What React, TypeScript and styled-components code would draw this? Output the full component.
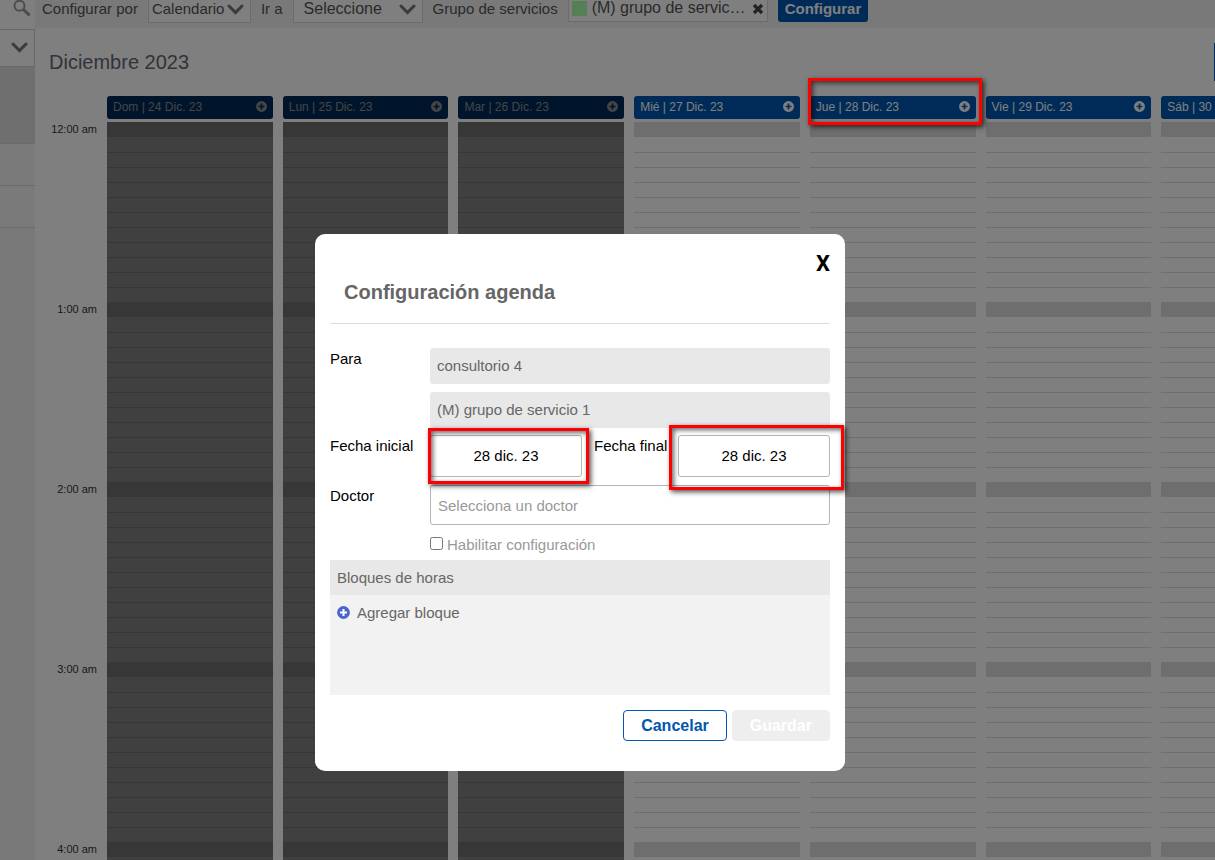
import React from "react";
import styled, { createGlobalStyle } from "styled-components";

const GlobalStyle = createGlobalStyle`
  *, *::before, *::after { box-sizing: border-box; }
  body {
    margin: 0;
    background: #fff;
    color: #555;
    font-family: "Liberation Sans", Arial, Helvetica, sans-serif;
    font-size: 15px;
    overflow: hidden;
  }
  button, input, select { font: inherit; color: inherit; margin: 0; }
`;

const Page = styled.div`
  display: flex;
  height: 100vh;
  overflow: hidden;
`;

const Sidebar = styled.aside`
  flex: 0 0 35px;
  display: flex;
  flex-direction: column;
  background: #f2f2f2;
`;

const SearchBox = styled.button`
  display: flex;
  justify-content: flex-end;
  align-items: flex-start;
  height: 29px;
  padding: 0 4px 0 0;
  border: 0;
  background: #fff;
`;

const SideToggle = styled.button`
  display: flex;
  align-items: center;
  justify-content: center;
  height: 38px;
  padding: 0 0 0 5px;
  border: 1px solid #d0d0d0;
  border-left: 0;
  background: #fff;
`;

const SideItem = styled.div<{ $active?: boolean }>`
  height: ${(p) => (p.$active ? 77 : 42)}px;
  border-bottom: 1px solid #d6d6d6;
  background: ${(p) => (p.$active ? "#dedede" : "#f5f5f5")};
`;

const Main = styled.main`
  flex: 1;
  min-width: 0;
  overflow: hidden;
`;

const Toolbar = styled.div`
  display: flex;
  align-items: flex-start;
  height: 28px;
  padding-left: 7px;
  background: #f2f2f2;
  line-height: 18px;
  white-space: nowrap;
`;

const ToolLabel = styled.label`
  margin-right: 10px;
`;

const SelectBox = styled.span<{ $large?: boolean }>`
  position: relative;
  flex: 0 0 ${(p) => (p.$large ? 130 : 103)}px;
  height: 23px;
  margin-right: 10px;
  border: 1px solid #d6d6d6;
  border-top: 0;
  background: #fff;
  font-size: ${(p) => (p.$large ? 16 : 15)}px;

  select {
    appearance: none;
    display: block;
    width: 100%;
    height: 18px;
    padding: 0 0 0 ${(p) => (p.$large ? 10 : 3)}px;
    border: 0;
    background: none;
    line-height: 18px;
  }

  svg {
    position: absolute;
    top: 4px;
    right: 6px;
    pointer-events: none;
  }
`;

const GroupField = styled.div`
  display: flex;
  align-items: flex-start;
  flex: 0 0 200px;
  height: 22px;
  margin-right: 10px;
  padding: 0 3px;
  border: 1px solid #d6d6d6;
  border-top: 0;
  background: #fff;
  font-size: 16px;
  line-height: 16px;
`;

const Swatch = styled.span`
  flex: 0 0 15px;
  height: 15px;
  margin: 1px 5px 0 0;
  background: #aaffaa;
`;

const GroupName = styled.span`
  flex: 1;
`;

const ClearButton = styled.button`
  padding: 3px 0 0;
  border: 0;
  background: none;
  line-height: 0;
`;

const ConfigureButton = styled.button`
  height: 22px;
  padding: 0 7px 4px;
  border: 0;
  border-radius: 0 0 3px 3px;
  background: #0057b0;
  color: #fff;
  font-weight: 700;
  line-height: 18px;
`;

const MonthBar = styled.div`
  display: flex;
  justify-content: space-between;
  align-items: center;
  height: 68px;
  padding-left: 14px;
`;

const Month = styled.h1`
  margin: 0;
  font-size: 20px;
  font-weight: 400;
  line-height: 24px;
  color: #667;
`;

const ViewButton = styled.button`
  width: 1px;
  height: 38px;
  padding: 0;
  border: 0;
  background: #0057b0;
`;

const Schedule = styled.div`
  display: flex;
`;

const TimeColumn = styled.div`
  flex: 0 0 62px;
  margin-right: 10px;
  padding-top: 26px;
  text-align: right;
`;

const TimeLabel = styled.div`
  height: 180px;
  color: #333;
  font-size: 11px;
  line-height: 14px;
`;

const Week = styled.div`
  flex: 1;
  display: grid;
  grid-template-columns: repeat(7, minmax(0, 1fr));
  column-gap: 10px;
  margin-right: -112px;
`;

const DayHeader = styled.header`
  display: flex;
  align-items: center;
  justify-content: space-between;
  height: 23px;
  margin-bottom: 3px;
  padding: 0 6px 2px;
  border-radius: 3px;
  background: #0057b0;
  color: #fff;
  font-size: 12px;
  line-height: 14px;
  white-space: nowrap;
`;

const AddButton = styled.button`
  padding: 0;
  border: 0;
  background: none;
  line-height: 0;
`;

const Hour = styled.div`
  display: grid;
  grid-template-rows: repeat(12, 15px);
`;

const Slot = styled.div`
  border-top: 1px solid #dcdcdc;

  &:nth-child(1) { background: #dcdcdc; }
  &:nth-child(2) { border-top: 0; }
`;

const Day = styled.section<{ $past: boolean }>`
  position: relative;

  ${DayHeader} {
    background: ${(p) => (p.$past ? "#002b58" : "#0057b0")};
    color: ${(p) => (p.$past ? "#8c8c8c" : "#fff")};
  }

  ${Hour} { background: ${(p) => (p.$past ? "#808080" : "#fff")}; }

  ${Slot} { border-color: ${(p) => (p.$past ? "#6e6e6e" : "#dcdcdc")}; }

  ${Slot}:nth-child(1) { background: ${(p) => (p.$past ? "#6e6e6e" : "#dcdcdc")}; }
`;

const Overlay = styled.div`
  position: fixed;
  inset: 0;
  display: flex;
  align-items: flex-start;
  justify-content: center;
  padding: 234px 55px 0 0;
  background: rgba(0, 0, 0, 0.5);
`;

const Dialog = styled.form`
  flex: 0 1 530px;
  padding: 15px 15px 30px;
  border-radius: 10px;
  background: #fff;
  color: #000;
`;

const CloseButton = styled.button`
  display: block;
  margin-left: auto;
  padding: 0;
  border: 0;
  background: none;
  font-family: Roboto, sans-serif;
  font-size: 22px;
  font-weight: 700;
  line-height: 30px;
`;

const Title = styled.h2`
  margin: 0 0 24px;
  padding: 1px 14px 19px;
  border-bottom: 1px solid #ddd;
  color: #666;
  font-size: 20px;
  line-height: 24px;
`;

const Row = styled.div<{ $gap: number }>`
  display: flex;
  align-items: flex-start;
  margin-bottom: ${(p) => p.$gap}px;
`;

const Label = styled.label<{ $second?: boolean }>`
  flex: 0 0 ${(p) => (p.$second ? 96 : 100)}px;
  padding: 2px 0 0 ${(p) => (p.$second ? 12 : 0)}px;
  line-height: 18px;
  white-space: nowrap;
`;

const Fields = styled.div`
  flex: 1;
  min-width: 0;
  display: grid;
  gap: 8px;
`;

const Input = styled.input`
  width: 100%;
  min-width: 0;
  height: 40px;
  padding: 0 7px;
  border: 1px solid #b5b5b5;
  border-radius: 3px;
  background: #fff;

  &::placeholder { color: #999; opacity: 1; }
`;

const ReadOnlyInput = styled(Input)`
  height: 36px;
  padding-bottom: 2px;
  border: 0;
  background: #e8e8e8;
  color: #666;
`;

const DateInput = styled(Input)`
  height: 42px;
  padding-bottom: 2px;
  text-align: center;
`;

const DateBox = styled.div`
  position: relative;
  flex: 1;
`;

const Highlight = styled.span<{ $inset: string }>`
  position: absolute;
  inset: ${(p) => p.$inset};
  border: 3px solid #f00;
  box-shadow: 2px 2px 5px rgba(0, 0, 0, 0.7), inset 2px 2px 5px rgba(0, 0, 0, 0.6);
  pointer-events: none;
  z-index: 1;
`;

const DayHighlight = styled(Highlight)`
  height: 47px;
`;

const CheckLabel = styled.label`
  display: flex;
  align-items: center;
  gap: 4px;
  height: 18px;
  margin: 11px 0 6px 100px;
  color: #999;
  line-height: 18px;

  input { width: 13px; height: 13px; margin-bottom: 3px; }
`;

const Blocks = styled.section`
  min-height: 135px;
  background: #f2f2f2;
  color: #666;
`;

const BlocksTitle = styled.h3`
  margin: 0;
  padding: 0 7px;
  background: #e8e8e8;
  font-size: 15px;
  font-weight: 400;
  line-height: 35px;
`;

const AddBlock = styled.button`
  display: flex;
  align-items: center;
  gap: 7px;
  height: 35px;
  padding: 0 7px;
  border: 0;
  background: none;
`;

const Actions = styled.footer`
  display: flex;
  justify-content: flex-end;
  gap: 5px;
  margin-top: 15px;
`;

const ActionButton = styled.button`
  height: 31px;
  padding: 0 17px;
  border: 1px solid #0057b0;
  border-radius: 4px;
  background: #fff;
  color: #0057b0;
  font-size: 16px;
  font-weight: 700;

  &:disabled {
    border-color: #eee;
    background: #eee;
    color: #fff;
  }
`;

const Chevron = () => (
  <svg width="17" height="12" viewBox="0 0 17 12" fill="none" aria-hidden="true">
    <path d="M2 2 8.5 8.6 15 2" stroke="#777" strokeWidth="3" strokeLinecap="round" />
  </svg>
);

const SearchIcon = () => (
  <svg width="18" height="17" viewBox="0 0 18 17" fill="none" stroke="#999" aria-hidden="true">
    <circle cx="6.5" cy="5.8" r="5" strokeWidth="2" />
    <path d="m10.8 9.8 4.8 4.6" strokeWidth="3" strokeLinecap="round" />
  </svg>
);

const ClearIcon = () => (
  <svg width="12" height="12" viewBox="0 0 12 12" aria-hidden="true">
    <path d="m2 2 8 8M10 2l-8 8" stroke="#444" strokeWidth="3.2" />
  </svg>
);

const PlusCircle = ({ size, color, cross }: { size: number; color: string; cross: string }) => (
  <svg width={size} height={size} viewBox="0 0 12 12" aria-hidden="true">
    <circle cx="6" cy="6" r="5.9" fill={color} />
    <path d="M6 2.8v6.4M2.8 6h6.4" stroke={cross} strokeWidth="1.9" />
  </svg>
);

const days = [
  { name: "Dom | 24 Dic. 23", past: true },
  { name: "Lun | 25 Dic. 23", past: true },
  { name: "Mar | 26 Dic. 23", past: true },
  { name: "Mié | 27 Dic. 23", past: false },
  { name: "Jue | 28 Dic. 23", past: false, marked: true },
  { name: "Vie | 29 Dic. 23", past: false },
  { name: "Sáb | 30 Dic. 23", past: false },
];

const hours = ["12:00 am", "1:00 am", "2:00 am", "3:00 am", "4:00 am"];
const slots = Array.from({ length: 12 }, (_, i) => i);

export default function App() {
  return (
    <>
      <GlobalStyle />
      <Page>
        <Sidebar>
          <SearchBox type="button" aria-label="Buscar"><SearchIcon /></SearchBox>
          <SideToggle type="button" aria-label="Desplegar"><Chevron /></SideToggle>
          <SideItem $active />
          <SideItem />
          <SideItem />
        </Sidebar>
        <Main>
          <Toolbar>
            <ToolLabel htmlFor="mode">Configurar por</ToolLabel>
            <SelectBox>
              <select id="mode"><option>Calendario</option></select>
              <Chevron />
            </SelectBox>
            <ToolLabel htmlFor="goto">Ir a</ToolLabel>
            <SelectBox $large>
              <select id="goto"><option>Seleccione</option></select>
              <Chevron />
            </SelectBox>
            <ToolLabel as="span">Grupo de servicios</ToolLabel>
            <GroupField>
              <Swatch />
              <GroupName>(M) grupo de servic…</GroupName>
              <ClearButton type="button" aria-label="Quitar"><ClearIcon /></ClearButton>
            </GroupField>
            <ConfigureButton type="button">Configurar</ConfigureButton>
          </Toolbar>
          <MonthBar>
            <Month>Diciembre 2023</Month>
            <ViewButton type="button" aria-label="Vista" />
          </MonthBar>
          <Schedule>
            <TimeColumn>
              {hours.map((h) => <TimeLabel key={h}>{h}</TimeLabel>)}
            </TimeColumn>
            <Week>
              {days.map((d) => (
                <Day key={d.name} $past={d.past}>
                  <DayHeader>
                    {d.name}
                    <AddButton type="button" aria-label="Agregar">
                      <PlusCircle
                        size={11}
                        color={d.past ? "#8c8c8c" : "#fff"}
                        cross={d.past ? "#002b58" : "#0057b0"}
                      />
                    </AddButton>
                  </DayHeader>
                  {hours.map((h) => (
                    <Hour key={h}>
                      {slots.map((s) => <Slot key={s} />)}
                    </Hour>
                  ))}
                  {d.marked && <DayHighlight $inset="-18px -6px auto -2px" />}
                </Day>
              ))}
            </Week>
          </Schedule>
        </Main>
      </Page>
      <Overlay>
        <Dialog role="dialog" aria-labelledby="dialog-title">
          <CloseButton type="button" aria-label="Cerrar">X</CloseButton>
          <Title id="dialog-title">Configuración agenda</Title>
          <Row $gap={7}>
            <Label htmlFor="room">Para</Label>
            <Fields>
              <ReadOnlyInput id="room" readOnly value="consultorio 4" />
              <ReadOnlyInput aria-label="Grupo" readOnly value="(M) grupo de servicio 1" />
            </Fields>
          </Row>
          <Row $gap={8}>
            <Label htmlFor="start">Fecha inicial</Label>
            <DateBox>
              <DateInput id="start" readOnly value="28 dic. 23" />
              <Highlight $inset="-7px -7px -7px -2px" />
            </DateBox>
            <Label $second htmlFor="end">Fecha final</Label>
            <DateBox>
              <DateInput id="end" readOnly value="28 dic. 23" />
              <Highlight $inset="-10px -14px -13px -9px" />
            </DateBox>
          </Row>
          <Row $gap={0}>
            <Label htmlFor="doctor">Doctor</Label>
            <Input id="doctor" placeholder="Selecciona un doctor" />
          </Row>
          <CheckLabel>
            <input type="checkbox" />
            Habilitar configuración
          </CheckLabel>
          <Blocks>
            <BlocksTitle>Bloques de horas</BlocksTitle>
            <AddBlock type="button">
              <PlusCircle size={13} color="#4a65cc" cross="#fff" />
              Agregar bloque
            </AddBlock>
          </Blocks>
          <Actions>
            <ActionButton type="button">Cancelar</ActionButton>
            <ActionButton type="submit" disabled>Guardar</ActionButton>
          </Actions>
        </Dialog>
      </Overlay>
    </>
  );
}
